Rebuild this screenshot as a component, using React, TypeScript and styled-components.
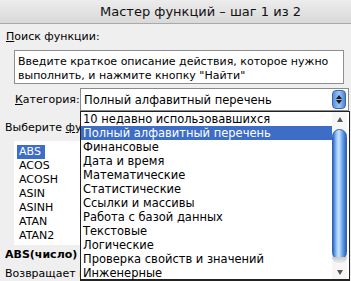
import React from "react";
import styled, { createGlobalStyle } from "styled-components";

const Global = createGlobalStyle`
  html, body { margin: 0; padding: 0; background: #efefef; }
  body { font-family: "DejaVu Sans", Verdana, sans-serif; font-size: 11px; color: #000; }
`;

const Window = styled.div`
  position: relative;
  width: 351px;
  height: 281px;
  overflow: hidden;
  background: #efefef;
  display: flex;
  flex-direction: column;
`;

const TitleBar = styled.div`
  height: 23px;
  border-bottom: 1px solid #a9a9a9;
  background: linear-gradient(#ececec, #d9d9d9);
  display: flex;
  align-items: center;
  justify-content: center;
  padding-left: 50px;
  font-size: 13px;
  color: #111;
`;

const Body = styled.div`
  display: flex;
  flex-direction: column;
  padding: 6px 0 0 5px;
`;

const Label = styled.div<{ $indent?: number; $bold?: boolean; $clip?: number }>`
  height: 14px;
  line-height: 14px;
  padding-left: ${(p) => p.$indent ?? 1}px;
  font-weight: ${(p) => (p.$bold ? "bold" : "normal")};
  white-space: nowrap;
  ${(p) => (p.$clip ? `max-width: ${p.$clip}px; overflow: hidden;` : "")}
`;

const Mn = styled.span`
  text-decoration: underline;
`;

const SearchBox = styled.div`
  margin: 6px 0 0 9px;
  padding: 4px 0 0 3px;
  box-sizing: border-box;
  width: 330px;
  height: 34px;
  border: 1px solid #8e8e8e;
  background: #fff;
  line-height: 14px;
  white-space: nowrap;
`;

const CategoryRow = styled.div`
  display: flex;
  align-items: center;
  margin-top: 4px;
  height: 23px;
`;

const CatLabel = styled.div`
  width: 65px;
  padding-left: 10px;
  white-space: nowrap;
`;

const Select = styled.div`
  width: 269px;
  height: 23px;
  box-sizing: border-box;
  border: 1px solid #8a8a8a;
  background: #fff;
  display: flex;
  align-items: center;
  padding-left: 3px;
  justify-content: space-between;
  font-size: 11.5px;
`;

const SelectButton = styled.div`
  width: 14px;
  height: 19px;
  margin-right: 2px;
  border-radius: 4px;
  background: linear-gradient(90deg, #5a8fd8, #9cc6f5 50%, #4d82cf);
  border: 1px solid #3a69b0;
  box-sizing: border-box;
  display: flex;
  flex-direction: column;
  align-items: center;
  justify-content: center;
  gap: 1px;
`;

const Tri = styled.div<{ $down?: boolean }>`
  width: 0;
  height: 0;
  border-left: 3px solid transparent;
  border-right: 3px solid transparent;
  ${(p) => (p.$down ? "border-top: 4px solid #1a1a1a;" : "border-bottom: 4px solid #1a1a1a;")}
`;

const PickLabel = styled(Label)`
  margin-top: 10px;
`;

const FuncList = styled.div`
  margin: 6px 0 0 9px;
  width: 66px;
  height: 104px;
  background: #fff;
  padding-top: 4px;
  box-sizing: border-box;
  display: flex;
  flex-direction: column;
`;

const FuncItem = styled.div`
  height: 14px;
  line-height: 14px;
  padding-left: 3px;
`;

const FuncText = styled.span<{ $sel?: boolean }>`
  display: inline-block;
  padding: 0 4px 0 2px;
  background: ${(p) => (p.$sel ? "#3d6dc6" : "transparent")};
  color: ${(p) => (p.$sel ? "#fff" : "#000")};
`;

const Signature = styled(Label)`
  margin-top: 3px;
`;

const Desc = styled(Label)`
  margin-top: 5px;
`;

const Dropdown = styled.div`
  position: absolute;
  left: 80px;
  top: 111px;
  width: 270px;
  height: 170px;
  box-sizing: border-box;
  border: 1px solid #222;
  border-bottom-width: 2px;
  background: #fff;
  display: flex;
`;

const Options = styled.div`
  flex: 1;
  display: flex;
  flex-direction: column;
  font-size: 11.5px;
`;

const Option = styled.div<{ $sel?: boolean }>`
  height: 14px;
  line-height: 14px;
  padding-left: 2px;
  white-space: nowrap;
  background: ${(p) => (p.$sel ? "#3d6dc6" : "transparent")};
  color: ${(p) => (p.$sel ? "#fff" : "#000")};
`;

const Scrollbar = styled.div`
  width: 15px;
  margin-right: 2px;
  display: flex;
  flex-direction: column;
  align-items: center;
  background: #f6f6f6;
`;

const ArrowCell = styled.div`
  height: 14px;
  display: flex;
  align-items: center;
  justify-content: center;
`;

const SmallTri = styled.div<{ $down?: boolean }>`
  width: 0;
  height: 0;
  border-left: 3px solid transparent;
  border-right: 3px solid transparent;
  ${(p) => (p.$down ? "border-top: 5px solid #555;" : "border-bottom: 5px solid #555;")}
`;

const Track = styled.div`
  flex: 1;
  width: 15px;
  display: flex;
  flex-direction: column;
  padding: 3px 0 2px;
  box-sizing: border-box;
`;

const Thumb = styled.div`
  flex: 1;
  border-radius: 8px;
  background: linear-gradient(90deg, #2d68cc 0%, #8fc0f5 25%, #cfe6ff 45%, #6fa8ee 70%, #2c64c5 100%);
  border: 1px solid #3563a8;
`;

const ThumbCap = styled.div`
  height: 6px;
  margin-top: -3px;
  border-radius: 0 0 7px 7px;
  background: linear-gradient(#c9c9c9, #ececec);
`;

const options = [
  "10 недавно использовавшихся",
  "Полный алфавитный перечень",
  "Финансовые",
  "Дата и время",
  "Математические",
  "Статистические",
  "Ссылки и массивы",
  "Работа с базой данных",
  "Текстовые",
  "Логические",
  "Проверка свойств и значений",
  "Инженерные",
];

const funcs = ["ABS", "ACOS", "ACOSH", "ASIN", "ASINH", "ATAN", "ATAN2"];

export default function App() {
  return (
    <Window>
      <Global />
      <TitleBar>Мастер функций – шаг 1 из 2</TitleBar>
      <Body>
        <Label>
          <Mn>П</Mn>оиск функции:
        </Label>
        <SearchBox>
          Введите краткое описание действия, которое нужно
          <br />
          выполнить, и нажмите кнопку "Найти"
        </SearchBox>
        <CategoryRow>
          <CatLabel>
            <Mn>К</Mn>атегория:
          </CatLabel>
          <Select>
            Полный алфавитный перечень
            <SelectButton>
              <Tri />
              <Tri $down />
            </SelectButton>
          </Select>
        </CategoryRow>
        <PickLabel $indent={0} $clip={75}>
          Выберите <Mn>ф</Mn>ункцию:
        </PickLabel>
        <FuncList>
          {funcs.map((f, i) => (
            <FuncItem key={f}>
              <FuncText $sel={i === 0}>{f}</FuncText>
            </FuncItem>
          ))}
        </FuncList>
        <Signature $indent={0} $bold $clip={75}>
          ABS(число)
        </Signature>
        <Desc $indent={0} $clip={75}>Возвращает модуль (абсолютную величину) числа.</Desc>
      </Body>
      <Dropdown>
        <Options>
          {options.map((o, i) => (
            <Option key={o} $sel={i === 1}>
              {o}
            </Option>
          ))}
        </Options>
        <Scrollbar>
          <ArrowCell>
            <SmallTri />
          </ArrowCell>
          <Track>
            <Thumb />
            <ThumbCap />
          </Track>
          <ArrowCell>
            <SmallTri $down />
          </ArrowCell>
        </Scrollbar>
      </Dropdown>
    </Window>
  );
}
